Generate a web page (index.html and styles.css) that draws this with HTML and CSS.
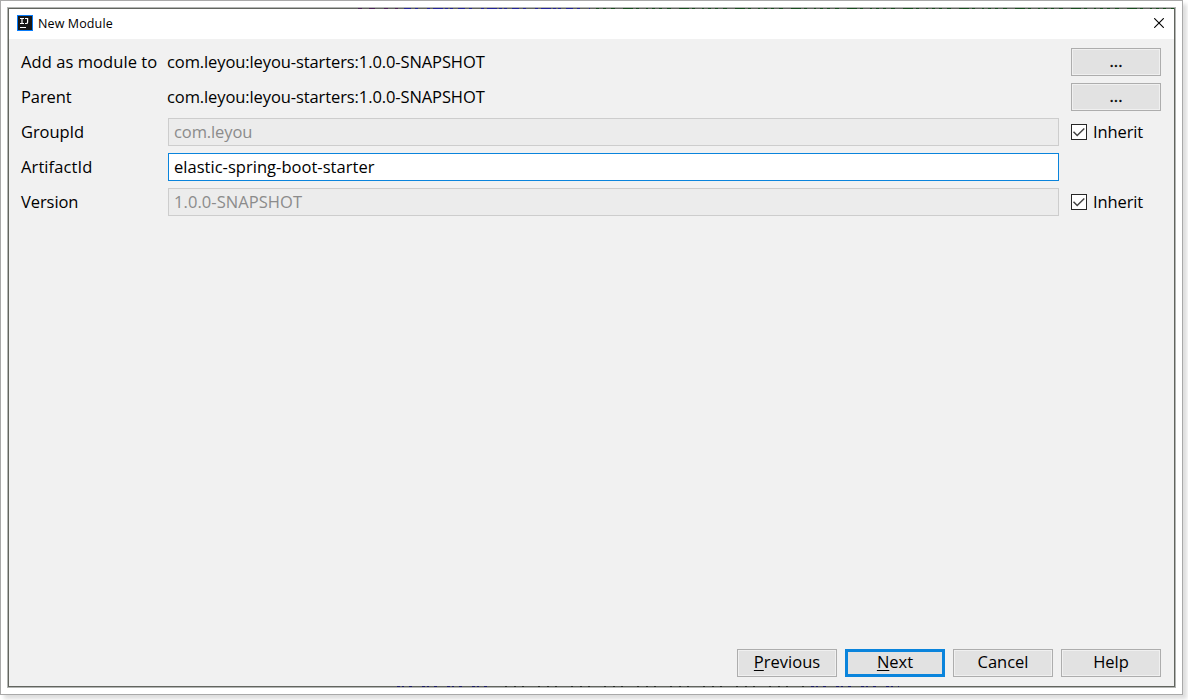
FILE: index.html
```html
<!DOCTYPE html>
<html lang="en">
<head>
<meta charset="utf-8">
<title>New Module</title>
<link rel="stylesheet" href="styles.css">
</head>
<body>
<div class="sheet">
  <div class="window">
    <svg class="edge edge-top" width="1167" height="1" viewBox="0 0 1167 1"><path stroke="#4a1f56" stroke-dasharray="4 7 6 9" d="M350 .5h40"/><path stroke="#22229a" stroke-dasharray="7 4 3 9 3 3 10 2 3 2 3 5" d="M396 .5h186"/><path stroke="#174d1d" stroke-dasharray="3 4 3 5 4 8 10 3 3 7 2 4" d="M588 .5h578"/></svg>
    <header class="titlebar">
      <svg class="logo" width="16" height="16" viewBox="0 0 16 16"><rect x=".5" y=".5" width="15" height="15" fill="#171717" stroke="#087cfa"/><path fill="none" stroke="#fff" d="M3 3.5h4M3 8.5h4M8 3.5h3"/><path fill="none" stroke="#fff" stroke-width="1.2" d="M5 3.5v5M10.6 3v4.2q0 1.3-1.3 1.3H8"/><path stroke="#fff" d="M3 12.5h6"/></svg>
      <h1 class="title">New Module</h1>
      <svg class="close" width="10" height="10" viewBox="0 0 10 10"><path fill="none" stroke="#000" stroke-width="1.1" d="M.2.2l9.6 9.6M9.8.2L.2 9.8"/></svg>
    </header>
    <main class="form">
      <div class="row"><span class="label l-add">Add as module to</span><span class="value">com.leyou:leyou-starters:1.0.0-SNAPSHOT</span><button class="btn more">...</button></div>
      <div class="row"><span class="label">Parent</span><span class="value">com.leyou:leyou-starters:1.0.0-SNAPSHOT</span><button class="btn more">...</button></div>
      <div class="row"><span class="label">GroupId</span><div class="field off f-group">com.leyou</div><span class="check"><svg width="16" height="16" viewBox="0 0 16 16"><rect x=".5" y=".5" width="15" height="15" fill="#fff" stroke="#262626"/><path fill="none" stroke="#444" stroke-width="1.5" d="M2.5 7.8l3.7 3.7 7.1-7"/></svg><span class="inherit">Inherit</span></span></div>
      <div class="row"><span class="label l-artifact">ArtifactId</span><div class="field on">elastic-spring-boot-starter</div></div>
      <div class="row"><span class="label">Version</span><div class="field off f-version">1.0.0-SNAPSHOT</div><span class="check"><svg width="16" height="16" viewBox="0 0 16 16"><rect x=".5" y=".5" width="15" height="15" fill="#fff" stroke="#262626"/><path fill="none" stroke="#444" stroke-width="1.5" d="M2.5 7.8l3.7 3.7 7.1-7"/></svg><span class="inherit">Inherit</span></span></div>
    </main>
    <footer class="actions">
      <button class="btn"><span><u>P</u>revious</span></button>
      <button class="btn b-next"><span><u>N</u>ext</span></button>
      <button class="btn">Cancel</button>
      <button class="btn">Help</button>
    </footer>
    <svg class="edge edge-bottom" width="1167" height="1" viewBox="0 0 1167 1"><path stroke="#1c1c66" stroke-dasharray="3 2 2 5 3 10" d="M389 .5h95M803 .5h88"/><path stroke="#272b27" stroke-dasharray="2 7 2 6 2 14" d="M497 .5h300"/></svg>
  </div>
</div>
</body>
</html>
```
FILE: styles.css
```css
* { box-sizing: border-box; }
body {
  margin: 0;
  width: 1188px;
  height: 700px;
  overflow: hidden;
  background: #fff;
  color: #000;
  font: 16.5px/24px "Open Sans", "Noto Sans", sans-serif;
}
.sheet {
  width: 1183px;
  height: 695px;
  padding: 6px;
  border: 1px solid #a9a9a9;
  background: #fff;
  box-shadow: 4px 4px 4px #dedede;
}
.window {
  position: relative;
  display: flex;
  flex-direction: column;
  width: 1169px;
  height: 681px;
  border: 1px solid #b4b6b4;
  outline: 1px solid #62655f;
  outline-offset: -2px;
  padding: 1px;
  background: #f1f1f1;
}
.edge { position: absolute; left: 0; }
.edge-top { top: 0; }
.edge-bottom { bottom: 0; }
.titlebar {
  display: flex;
  align-items: center;
  height: 30px;
  padding: 0 10px 0 8px;
  background: #fff;
}
.logo { margin-top: -2px; }
.title {
  margin: -1px auto 0 5px;
  font-size: 12.5px;
  font-weight: 400;
  line-height: 20px;
  letter-spacing: .12px;
}
.close { margin-top: -2px; }
.form {
  display: flex;
  flex-direction: column;
  gap: 7px;
  padding: 9px 13px 0 12px;
}
.row {
  display: grid;
  grid-template-columns: 147px 891px 90px;
  height: 28px;
  align-items: center;
}
.row > :nth-child(3) { margin-left: 12px; width: 90px; }
.label, .value, .check { white-space: nowrap; }
.label { letter-spacing: -.08px; }
.l-add { letter-spacing: .07px; }
.l-artifact { letter-spacing: .1px; }
.value { margin-left: -1px; letter-spacing: -.1px; }
.field {
  height: 28px;
  padding: 0 5px;
  border: 1px solid #cdcdcd;
  line-height: 26px;
}
.off { background: #ececec; color: #8b8b8b; }
.on { background: #fff; border-color: #0a84dc; letter-spacing: .03px; }
.f-group { letter-spacing: -.1px; }
.f-version { letter-spacing: .06px; }
.check { display: flex; align-items: center; gap: 6px; }
.inherit { letter-spacing: -.12px; }
.btn {
  width: 90px;
  height: 28px;
  padding: 0 0 2px;
  border: 1px solid #adadad;
  background: #e2e2e2;
  box-shadow: inset 0 0 0 1px #f0f0f0;
  color: #000;
  font: inherit;
}
.more { -webkit-text-stroke: .3px #000; }
.actions {
  display: flex;
  justify-content: flex-end;
  gap: 8px;
  margin-top: auto;
  padding: 0 13px 9px;
}
.actions .btn { width: 100px; }
.actions .b-next {
  border: 3px solid #0a84dc;
  box-shadow: none;
  line-height: 20px;
}
u { text-underline-offset: 2px; text-decoration-thickness: 1px; }
```
